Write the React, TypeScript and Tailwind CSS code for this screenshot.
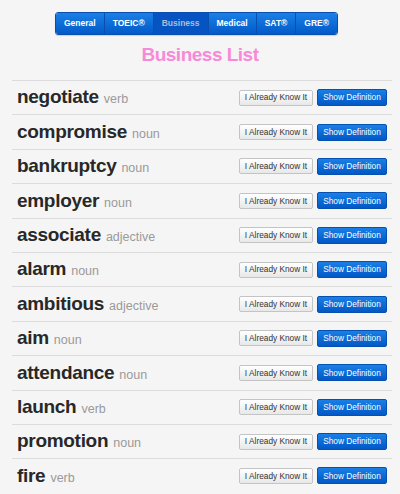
import React from "react";

const tabs = ["General", "TOEIC®", "Business", "Medical", "SAT®", "GRE®"];

const words: { word: string; pos: string }[] = [
  { word: "negotiate", pos: "verb" },
  { word: "compromise", pos: "noun" },
  { word: "bankruptcy", pos: "noun" },
  { word: "employer", pos: "noun" },
  { word: "associate", pos: "adjective" },
  { word: "alarm", pos: "noun" },
  { word: "ambitious", pos: "adjective" },
  { word: "aim", pos: "noun" },
  { word: "attendance", pos: "noun" },
  { word: "launch", pos: "verb" },
  { word: "promotion", pos: "noun" },
  { word: "fire", pos: "verb" },
];

const WordRow = ({ word, pos }: { word: string; pos: string }) => (
  <div className="flex h-[34.4px] items-center border-t border-[#dcdcdc] pl-[5px] pr-[5px]">
    <div className="flex flex-1 items-baseline gap-[5px]">
      <span className="text-[19px] font-bold tracking-[-0.3px] text-[#282828]">{word}</span>
      <span className="text-[12.5px] text-[#9a9a9a]">{pos}</span>
    </div>
    <button className="flex h-[16px] w-[74px] items-center justify-center rounded-[2px] border border-[#c4c4c4] bg-gradient-to-b from-white to-[#e8e8e8] text-[8.3px] text-[#333]">
      I Already Know It
    </button>
    <button className="ml-[4px] flex h-[17px] w-[70px] items-center justify-center rounded-[2px] border border-[#0550b0] bg-gradient-to-b from-[#1a7fe6] to-[#0258c6] text-[8.3px] text-white">
      Show Definition
    </button>
  </div>
);

export default function App() {
  return (
    <div
      className="min-h-[494px] bg-[#f5f5f5] pt-[12px]"
      style={{ fontFamily: '"Liberation Sans", Arial, sans-serif' }}
    >
      <div className="flex justify-center">
        <div className="ml-[-7px] flex h-[23px] overflow-hidden rounded-[3px] border border-[#0a4fb0] shadow-[0_1px_1px_rgba(0,0,0,0.15)]">
          {tabs.map((t, i) => (
            <div
              key={t}
              className={
                t === "Business"
                  ? "flex items-center border-l border-[#0a4fb0] bg-[#0654c2] px-[8px] text-[8.5px] font-bold text-[#a9bedc]"
                  : i === 0
                  ? "flex items-center bg-gradient-to-b from-[#1a80e6] to-[#035ac8] px-[8px] text-[8.5px] font-bold text-white"
                  : "flex items-center border-l border-[#0a4fb0] bg-gradient-to-b from-[#1a80e6] to-[#035ac8] px-[8px] text-[8.5px] font-bold text-white"
              }
            >
              {t}
            </div>
          ))}
        </div>
      </div>
      <h1 className="mt-[9px] text-center text-[19px] font-bold leading-[22px] tracking-[-0.5px] text-[#f78ad8]">
        Business List
      </h1>
      <div className="ml-[12px] mt-[14px] w-[380px]">
        {words.map((w) => (
          <WordRow key={w.word} word={w.word} pos={w.pos} />
        ))}
      </div>
    </div>
  );
}
